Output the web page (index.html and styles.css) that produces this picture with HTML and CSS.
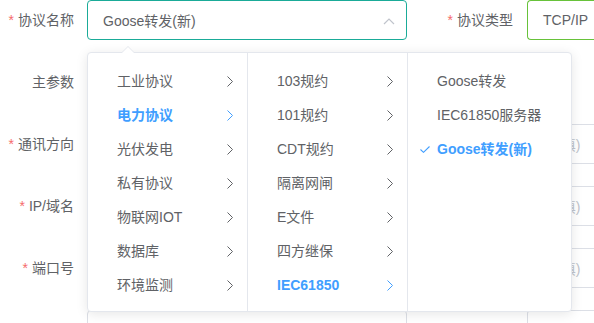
FILE: index.html
```html
<!DOCTYPE html>
<html lang="zh">
<head>
<meta charset="utf-8">
<link rel="stylesheet" href="styles.css">
</head>
<body>
<div class="form">
  <div class="row">
    <div class="label"><span class="req">*</span>协议名称</div>
    <div class="input select focus">
      <span class="val">Goose转发(新)</span>
      <svg class="caret" width="12" height="8" viewBox="0 0 12 8"><path d="M1 7 L6 2 L11 7" fill="none" stroke="#c0c4cc" stroke-width="1.2"/></svg>
    </div>
    <div class="label2"><span class="req">*</span>协议类型</div>
    <div class="input wide green"><span class="val">TCP/IP</span></div>
  </div>
  <div class="row">
    <div class="label">主参数</div>
  </div>
  <div class="row">
    <div class="label"><span class="req">*</span>通讯方向</div>
    <div class="input"></div>
    <div class="label2"></div>
    <div class="input wide"><span class="ph">(选填)</span></div>
  </div>
  <div class="row">
    <div class="label"><span class="req">*</span>IP/域名</div>
    <div class="input"></div>
    <div class="label2"></div>
    <div class="input wide"><span class="ph">(选填)</span></div>
  </div>
  <div class="row">
    <div class="label"><span class="req">*</span>端口号</div>
    <div class="input"></div>
    <div class="label2"></div>
    <div class="input wide"><span class="ph">(选填)</span></div>
  </div>
  <div class="row">
    <div class="label"></div>
    <div class="input"></div>
    <div class="label2"></div>
    <div class="input wide"></div>
  </div>
</div>

<div class="cascader">
  <div class="arrow"></div>
  <div class="menu m1">
    <div class="node">工业协议<svg class="chev" viewBox="0 0 6 11"><path d="M0.5 0.5 L5.5 5.5 L0.5 10.5" /></svg></div>
    <div class="node active">电力协议<svg class="chev" viewBox="0 0 6 11"><path d="M0.5 0.5 L5.5 5.5 L0.5 10.5" /></svg></div>
    <div class="node">光伏发电<svg class="chev" viewBox="0 0 6 11"><path d="M0.5 0.5 L5.5 5.5 L0.5 10.5" /></svg></div>
    <div class="node">私有协议<svg class="chev" viewBox="0 0 6 11"><path d="M0.5 0.5 L5.5 5.5 L0.5 10.5" /></svg></div>
    <div class="node">物联网IOT<svg class="chev" viewBox="0 0 6 11"><path d="M0.5 0.5 L5.5 5.5 L0.5 10.5" /></svg></div>
    <div class="node">数据库<svg class="chev" viewBox="0 0 6 11"><path d="M0.5 0.5 L5.5 5.5 L0.5 10.5" /></svg></div>
    <div class="node">环境监测<svg class="chev" viewBox="0 0 6 11"><path d="M0.5 0.5 L5.5 5.5 L0.5 10.5" /></svg></div>
  </div>
  <div class="menu m2">
    <div class="node">103规约<svg class="chev" viewBox="0 0 6 11"><path d="M0.5 0.5 L5.5 5.5 L0.5 10.5" /></svg></div>
    <div class="node">101规约<svg class="chev" viewBox="0 0 6 11"><path d="M0.5 0.5 L5.5 5.5 L0.5 10.5" /></svg></div>
    <div class="node">CDT规约<svg class="chev" viewBox="0 0 6 11"><path d="M0.5 0.5 L5.5 5.5 L0.5 10.5" /></svg></div>
    <div class="node">隔离网闸<svg class="chev" viewBox="0 0 6 11"><path d="M0.5 0.5 L5.5 5.5 L0.5 10.5" /></svg></div>
    <div class="node">E文件<svg class="chev" viewBox="0 0 6 11"><path d="M0.5 0.5 L5.5 5.5 L0.5 10.5" /></svg></div>
    <div class="node">四方继保<svg class="chev" viewBox="0 0 6 11"><path d="M0.5 0.5 L5.5 5.5 L0.5 10.5" /></svg></div>
    <div class="node active">IEC61850<svg class="chev" viewBox="0 0 6 11"><path d="M0.5 0.5 L5.5 5.5 L0.5 10.5" /></svg></div>
  </div>
  <div class="menu m3">
    <div class="node">Goose转发</div>
    <div class="node">IEC61850服务器</div>
    <div class="node active"><svg class="check" viewBox="0 0 10 7"><path d="M0.5 3.5 L3.5 6.3 L9.5 0.5" /></svg>Goose转发(新)</div>
  </div>
</div>
</body>
</html>
```

FILE: styles.css
```css
* { box-sizing: border-box; }
html, body { height: 323px; }
body {
  margin: 0;
  background: #fff;
  font-family: "Liberation Sans", "Noto Sans CJK SC", sans-serif;
  font-size: 14px;
  color: #606266;
  overflow: hidden;
  position: relative;
}
.form {
  display: flex;
  flex-direction: column;
  gap: 22px;
}
.row {
  display: flex;
  height: 40px;
  align-items: center;
}
.label {
  width: 87px;
  padding-right: 13px;
  text-align: right;
  line-height: 40px;
  flex: none;
}
.label2 {
  width: 120px;
  padding-right: 14px;
  text-align: right;
  line-height: 40px;
  flex: none;
}
.req {
  color: #f56c6c;
  margin-right: 4px;
}
.input {
  width: 320px;
  height: 40px;
  flex: none;
  border: 1px solid #dcdfe6;
  border-radius: 4px;
  padding: 0 15px;
  display: flex;
  align-items: center;
  justify-content: space-between;
}
.input.wide { width: 67px; border-right: none; border-radius: 4px 0 0 4px; }
.input.focus { border-color: #1aab98; }
.input.green { border-color: #67c23a; }
.val { color: #606266; white-space: nowrap; }
.ph { color: #c0c4cc; white-space: nowrap; }
.caret { margin-right: -4px; margin-top: 1px; }

.cascader {
  position: absolute;
  left: 87px;
  top: 52px;
  display: flex;
  background: #fff;
  border: 1px solid #e4e7ed;
  border-radius: 4px;
  box-shadow: 0 2px 12px rgba(0, 0, 0, 0.1);
}
.arrow {
  position: absolute;
  left: 34px;
  top: -7px;
  width: 0;
  height: 0;
  border-left: 6px solid transparent;
  border-right: 6px solid transparent;
  border-bottom: 6px solid #e4e7ed;
}
.arrow::after {
  content: "";
  position: absolute;
  left: -6px;
  top: 1px;
  border-left: 6px solid transparent;
  border-right: 6px solid transparent;
  border-bottom: 6px solid #fff;
}
.menu {
  padding: 11px 0 9px;
  border-right: 1px solid #e4e7ed;
}
.m1 { width: 160px; }
.m2 { width: 160px; }
.m3 { width: 163px; border-right: none; }
.node {
  position: relative;
  height: 34px;
  line-height: 34px;
  padding-left: 29px;
  color: #606266;
  white-space: nowrap;
}
.node.active {
  color: #409eff;
  font-weight: bold;
}
.chev {
  position: absolute;
  right: 14px;
  top: 12px;
  width: 6px;
  height: 11px;
  fill: none;
  stroke: #606266;
  stroke-width: 1;
}
.active .chev { stroke: #409eff; }
.check {
  position: absolute;
  left: 12px;
  top: 14px;
  width: 10px;
  height: 7px;
  fill: none;
  stroke: #409eff;
  stroke-width: 1.1;
}
```
